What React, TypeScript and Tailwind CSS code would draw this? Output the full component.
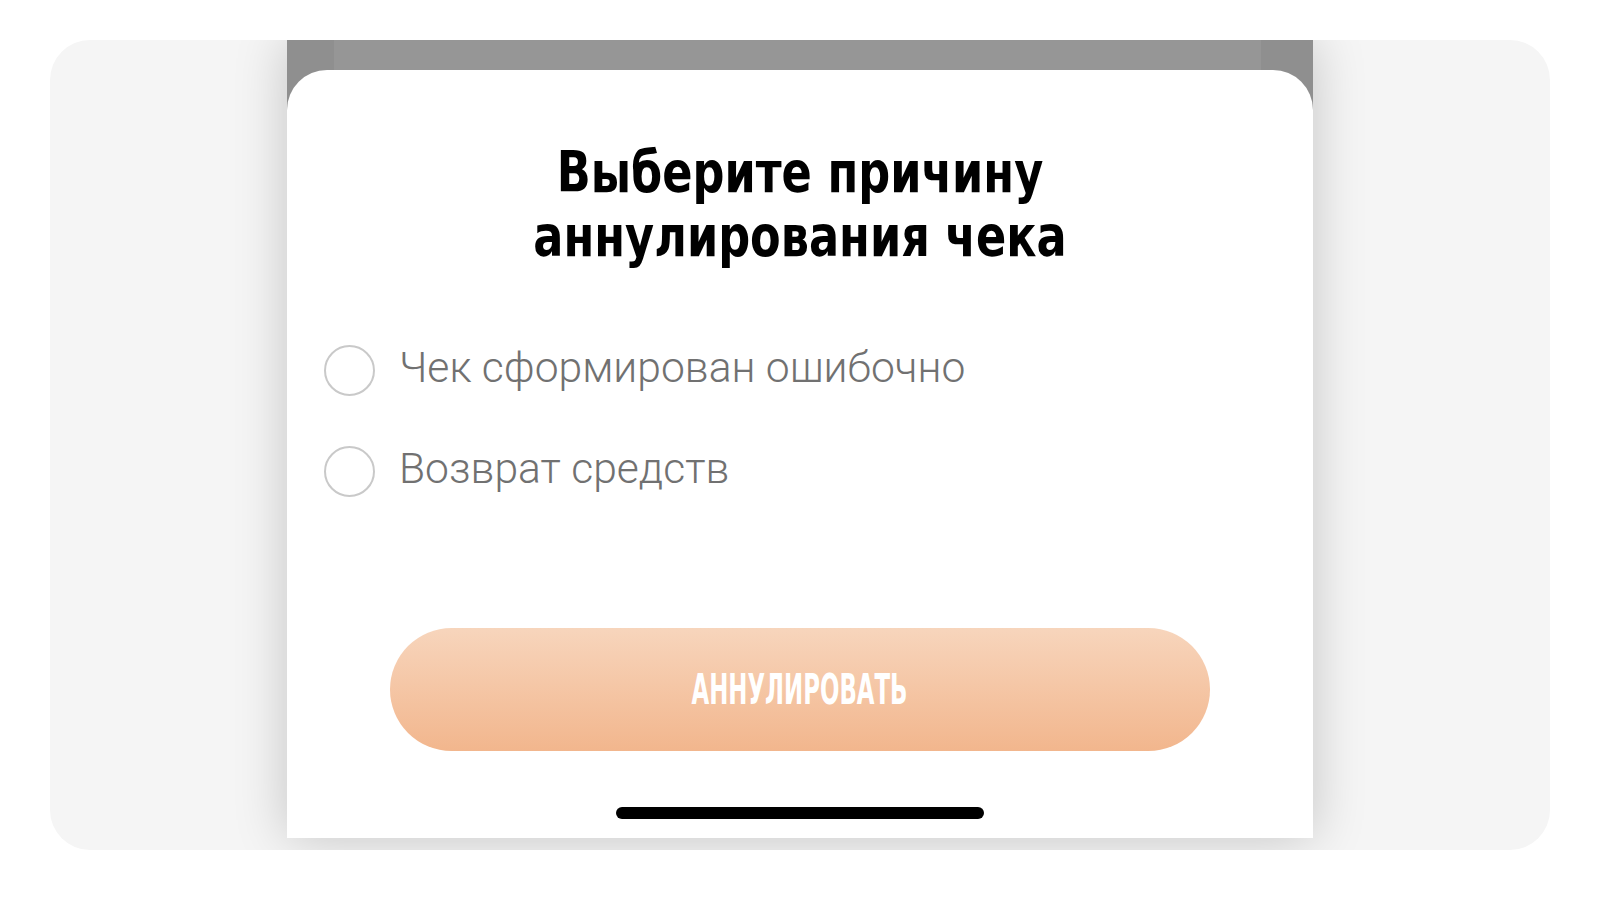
import React, { useState } from "react";

type Reason = {
  id: string;
  label: string;
};

const reasons: Reason[] = [
  { id: "mistake", label: "Чек сформирован ошибочно" },
  { id: "refund", label: "Возврат средств" },
];

// DIN-like headings: condensed face, squeezed a bit more horizontally
const condensed =
  "font-['DejaVu_Sans_Condensed','DejaVu_Sans',sans-serif] font-stretch-condensed font-bold";

const CancelReceipt: React.FC = () => {
  const [selected, setSelected] = useState<string | null>(null);

  return (
    <div className="flex h-full flex-col rounded-t-[40px] bg-white">
      {/* TITLE */}
      <h1
        className={`${condensed} pt-[70px] text-center text-[57px] leading-[64px] text-black [transform:scaleX(0.87)]`}
      >
        Выберите причину
        <br />
        аннулирования чека
      </h1>

      {/* REASONS */}
      <div className="mt-[77px] flex flex-col gap-[50px] pl-[37px]">
        {reasons.map((r) => (
          <button
            key={r.id}
            type="button"
            onClick={() => setSelected(r.id)}
            className="flex h-[51px] items-center gap-[24px] text-left"
          >
            <span className="flex h-[51px] w-[51px] shrink-0 items-center justify-center rounded-full border-2 border-[#c9c9c9]">
              {selected === r.id && (
                <span className="h-[27px] w-[27px] rounded-full bg-[#f2b68e]" />
              )}
            </span>
            <span className="pb-[5px] font-['Roboto',sans-serif] text-[42.6px] font-light text-[#717171]">
              {r.label}
            </span>
          </button>
        ))}
      </div>

      {/* SUBMIT */}
      <div className="mt-[131px] px-[103px]">
        <button
          type="button"
          className="flex h-[123px] w-full items-center justify-center rounded-full bg-gradient-to-b from-[#f7d5bc] to-[#f2b68d]"
        >
          <span className={`${condensed} inline-block text-[42px] text-white [transform:scaleX(0.605)]`}>
            АННУЛИРОВАТЬ
          </span>
        </button>
      </div>

      {/* HOME INDICATOR */}
      <div className="mt-[56px] flex justify-center">
        <div className="h-[12px] w-[368px] rounded-full bg-black" />
      </div>
    </div>
  );
};

export default function App() {
  return (
    <div className="flex h-[897px] w-[1600px] justify-center bg-white pt-[40px]">
      <div className="flex h-[810px] w-[1500px] justify-center overflow-hidden rounded-[40px] bg-[#f5f5f5]">
        <div className="flex h-[798px] w-[1026px] flex-col bg-[linear-gradient(to_right,#8f8f8f_0,#8f8f8f_47px,#969696_47px,#969696_calc(100%-52px),#8f8f8f_calc(100%-52px))] pt-[30px] shadow-[0_0_50px_rgba(0,0,0,0.2)]">
          <CancelReceipt />
        </div>
      </div>
    </div>
  );
}
